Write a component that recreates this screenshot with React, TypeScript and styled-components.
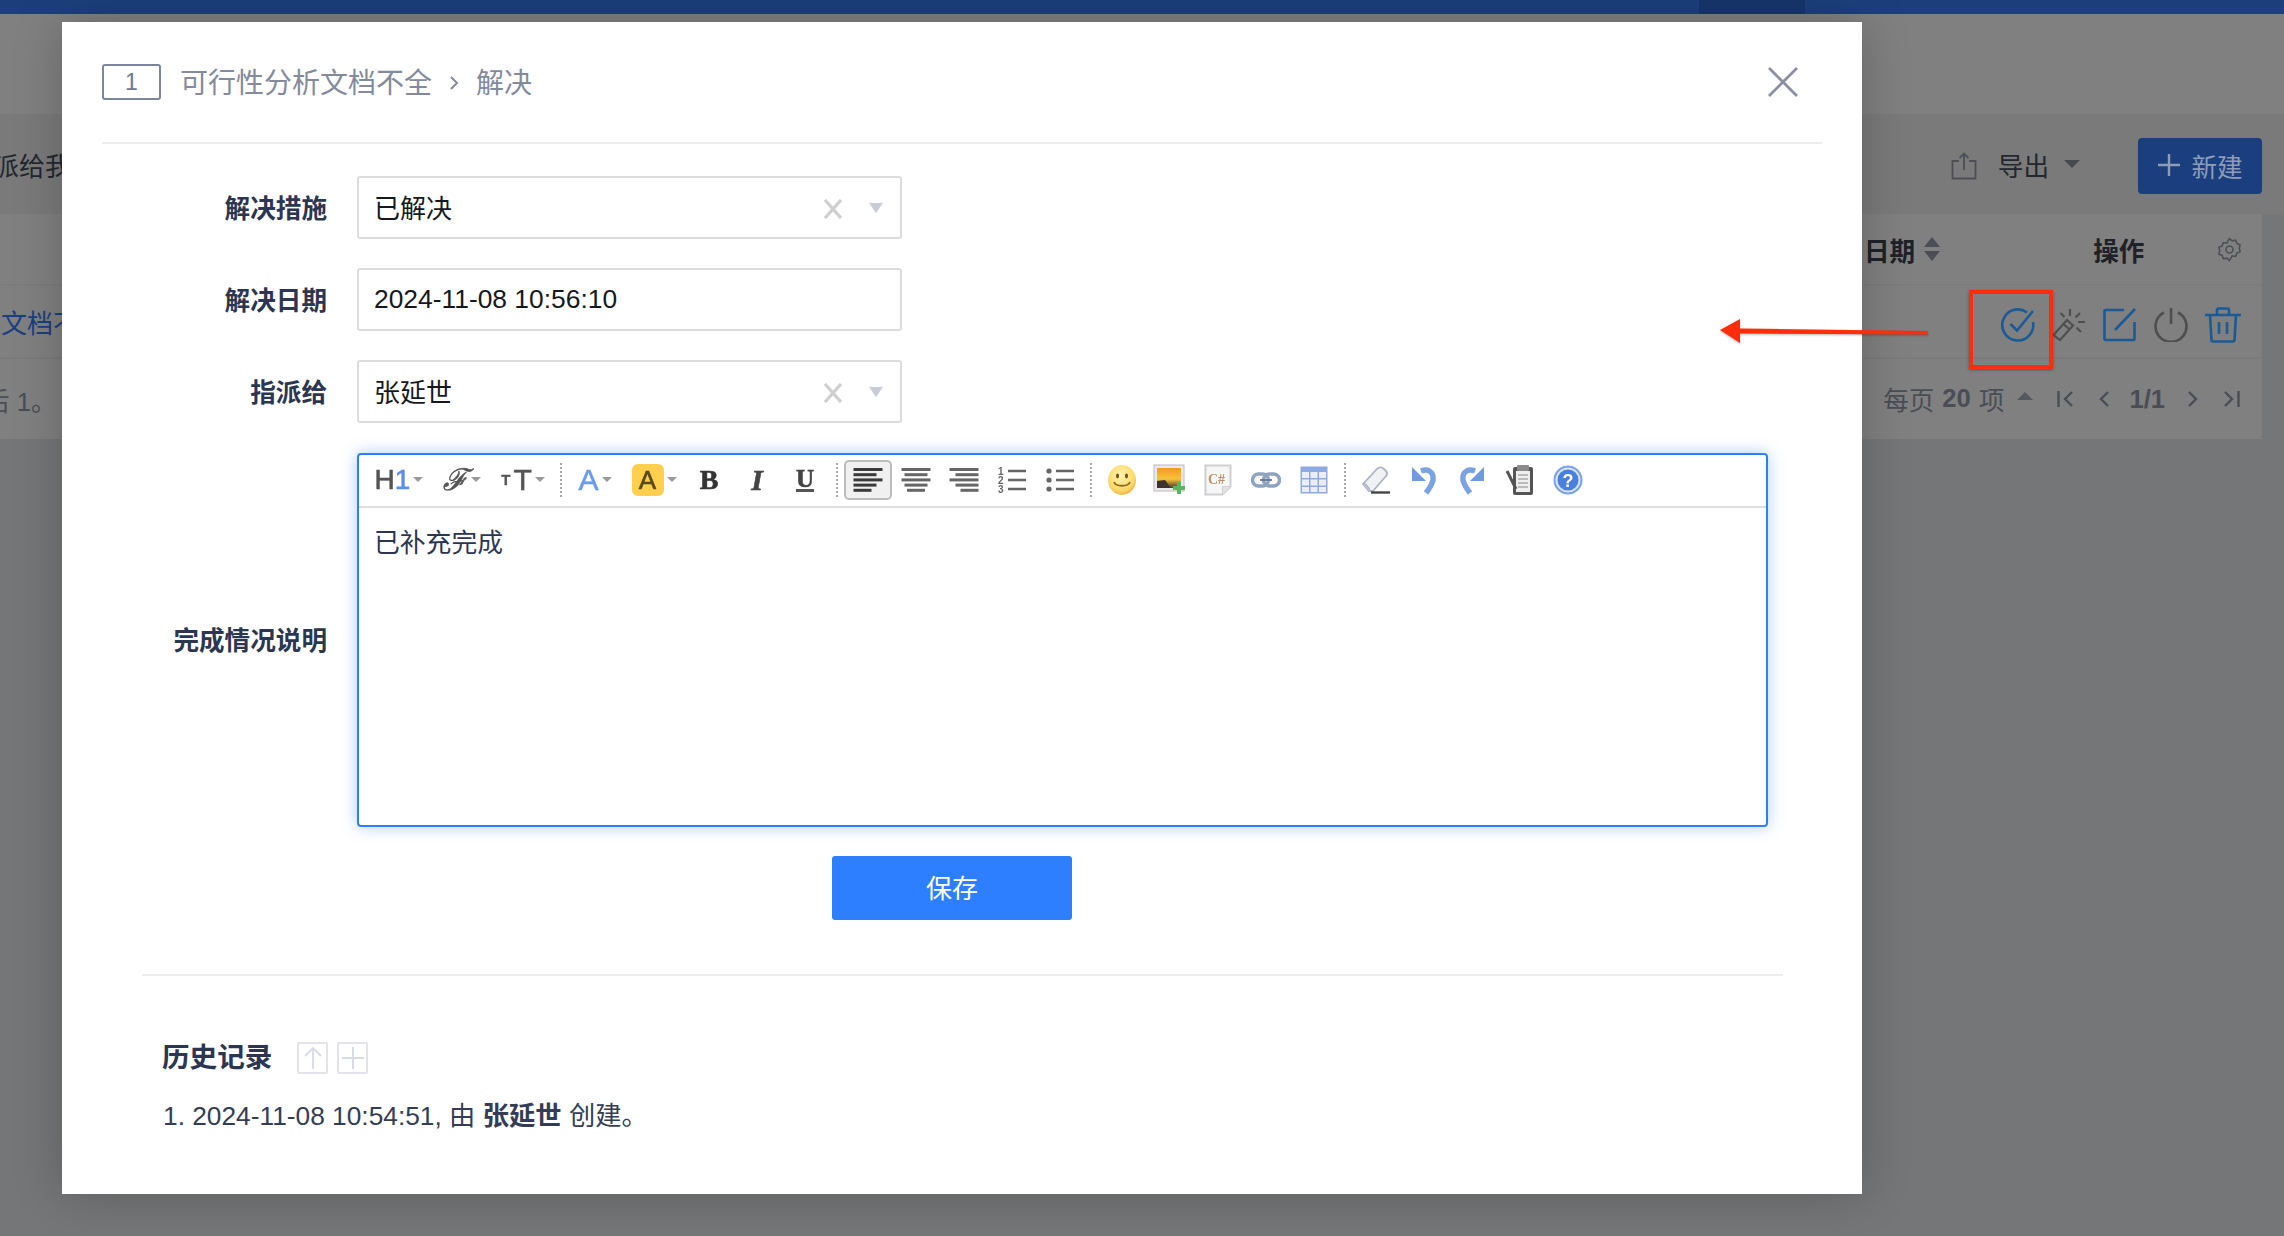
import React from "react";
import styled, { createGlobalStyle } from "styled-components";

const Global = createGlobalStyle`
  html, body { margin: 0; padding: 0; width: 2284px; height: 1236px; overflow: hidden; background: #757677; }
  #root { position: relative; width: 2284px; height: 1236px; overflow: hidden; }
  * { box-sizing: border-box; }
  svg { flex: none; }
  body { font-family: "Liberation Sans", "Noto Sans CJK SC", sans-serif; }
`;

const Page = styled.div`
  display: flex;
  flex-direction: column;
  width: 2284px;
  height: 1236px;
  background: #757677;
  color: #23272f;
  font-size: 26px;
`;
const TopBar = styled.div`
  height: 14px;
  background: #1c3f7c;
  padding-left: 1699px;
  flex: none;
`;
const TopTab = styled.div`
  width: 106px;
  height: 14px;
  background: #17366c;
`;
const SubBar = styled.div`
  height: 100px;
  background: #808080;
  flex: none;
`;
const ToolRow = styled.div`
  height: 100px;
  flex: none;
  background: #7a7a7a;
  display: flex;
  align-items: center;
  padding: 4px 22px 0 0;
`;
const ClippedText = styled.span<{ $color?: string; $ml: number; $mt?: number }>`
  margin-left: ${(p) => p.$ml}px;
  margin-top: ${(p) => p.$mt || 0}px;
  color: ${(p) => p.$color || "#23272f"};
  white-space: nowrap;
`;
const Spacer = styled.div`
  flex: 1;
`;
const NavGap = styled.span`
  width: 26px;
  flex: none;
`;
const ExportGroup = styled.div`
  display: flex;
  align-items: center;
  margin-right: 58px;
  color: #23272f;
`;
const ExportLabel = styled.span`
  margin: -4px 15px 0 21px;
  font-size: 25.6px;
`;
const DarkCaret = styled.span`
  width: 0;
  height: 0;
  border-left: 8px solid transparent;
  border-right: 8px solid transparent;
  border-top: 8px solid #46494f;
  margin-top: -4px;
`;
const NewButton = styled.div`
  width: 124px;
  height: 56px;
  border-radius: 4px;
  background: #1b3f7e;
  color: #8c9cb9;
  display: flex;
  align-items: center;
  justify-content: center;
  gap: 10px;
  font-size: 25.6px;
  padding-bottom: 2px;
`;
const TableHead = styled.div`
  height: 72px;
  width: 2262px;
  flex: none;
  background: #808080;
  border-bottom: 2px solid #7c7c7c;
  display: flex;
  align-items: center;
  padding-right: 19px;
  font-weight: 700;
  font-size: 25.6px;
  color: #1e2128;
`;
const HeadDate = styled.span`
  margin-left: 1864px;
  margin-right: 8px;
  white-space: nowrap;
`;
const HeadAction = styled.span`
  margin-left: 152px;
  margin-right: 73px;
  white-space: nowrap;
`;
const TableRow = styled.div`
  height: 73px;
  width: 2262px;
  flex: none;
  background: #808080;
  border-bottom: 2px solid #7b7b7b;
  display: flex;
  align-items: center;
`;
const RowIcons = styled.div`
  display: flex;
  align-items: center;
  margin-left: auto;
  padding: 6px 21px 0 0;
  gap: 17px;
`;
const Pager = styled.div`
  height: 80px;
  width: 2262px;
  flex: none;
  background: #808080;
  display: flex;
  align-items: center;
  color: #4a4d55;
  font-size: 25.6px;
`;
const PagerSize = styled.div`
  margin-left: auto;
  display: flex;
  align-items: center;
  white-space: nowrap;
  margin-top: -2px;
  b { margin: 0 8px; }
`;
const SmallUpCaret = styled.span`
  width: 0;
  height: 0;
  border-left: 8px solid transparent;
  border-right: 8px solid transparent;
  border-bottom: 8px solid #55585f;
  margin: -4px 0 0 13px;
`;
const PagerNav = styled.div`
  display: flex;
  align-items: center;
  margin: 0 22px 0 24px;
  b { margin: 0 23px 0 20px; }
`;

const Modal = styled.div`
  position: absolute;
  left: 62px;
  top: 22px;
  width: 1800px;
  height: 1172px;
  background: #fff;
  box-shadow: 0 0 46px rgba(0, 0, 0, 0.22);
  display: flex;
  flex-direction: column;
`;
const Header = styled.div`
  height: 122px;
  margin: 0 40px;
  border-bottom: 2px solid #eeeeee;
  flex: none;
  display: flex;
  align-items: center;
  color: #838a9c;
  font-size: 28px;
`;
const IdBadge = styled.span`
  width: 59px;
  height: 36px;
  border: 2px solid #7d869c;
  border-radius: 3px;
  display: flex;
  align-items: center;
  justify-content: center;
  font-size: 23px;
  margin-right: 19px;
  color: #6f778c;
`;
const Crumb = styled.span`
  white-space: nowrap;
  margin-top: -2px;
`;
const CloseWrap = styled.div`
  margin-left: auto;
  margin-right: 24px;
  display: flex;
`;
const Form = styled.div`
  display: flex;
  flex-direction: column;
  gap: 29px;
  margin-top: 32px;
  flex: none;
`;
const FormRow = styled.div`
  display: grid;
  grid-template-columns: 265px 1fr;
  column-gap: 30px;
  align-items: center;
`;
const Label = styled.label`
  text-align: right;
  font-size: 25.6px;
  font-weight: 700;
  color: #2d3650;
  white-space: nowrap;
  padding-bottom: 2px;
`;
const Field = styled.div`
  width: 545px;
  height: 63px;
  border: 2px solid #dcdcdc;
  border-radius: 3px;
  display: flex;
  align-items: center;
  padding: 0 17px 0 15px;
  color: #16181d;
  font-size: 26px;
`;
const FieldText = styled.span<{ $lift?: boolean; $size?: number }>`
  flex: 1;
  white-space: nowrap;
  padding-bottom: ${(p) => (p.$lift ? 3 : 0)}px;
  font-size: ${(p) => p.$size || 26}px;
`;
const SelectCaret = styled.span`
  width: 0;
  height: 0;
  border-left: 7px solid transparent;
  border-right: 7px solid transparent;
  border-top: 10px solid #c8ccd6;
  margin-left: 26px;
`;
const Editor = styled.div`
  width: 1411px;
  height: 374px;
  margin-top: 1px;
  border: 2px solid #2e7fff;
  border-radius: 4px;
  box-shadow: 0 0 16px rgba(46, 127, 255, 0.38);
  display: flex;
  flex-direction: column;
`;
const Toolbar = styled.div`
  height: 53px;
  border-bottom: 2px solid #dddddd;
  display: flex;
  align-items: center;
  padding: 0 0 2px 16px;
  flex: none;
`;
const Slot = styled.div<{ $ml?: number; $active?: boolean }>`
  width: 48px;
  height: 40px;
  flex: none;
  margin-left: ${(p) => p.$ml || 0}px;
  display: flex;
  align-items: center;
  justify-content: center;
  gap: 3px;
  filter: blur(0.5px);
  border-radius: 5px;
  border: ${(p) => (p.$active ? "2px solid #bcbcbc" : "none")};
  background: ${(p) => (p.$active ? "#f0f0f0" : "transparent")};
`;
const Dots = styled.div<{ $ml?: number }>`
  width: 14px;
  height: 34px;
  margin-left: ${(p) => p.$ml || 0}px;
  flex: none;
  display: flex;
  justify-content: center;
  &::after {
    content: "";
    width: 0;
    height: 34px;
    border-left: 2px dotted #a9a9a9;
  }
`;
const MiniCaret = styled.span`
  width: 0;
  height: 0;
  flex: none;
  border-left: 5px solid transparent;
  border-right: 5px solid transparent;
  border-top: 5px solid #9a9a9a;
`;
const GlyphText = styled.span<{ $size: number; $color?: string; $font?: string; $weight?: number; $italic?: boolean; $stroke?: number }>`
  font-family: ${(p) => p.$font || '"Liberation Sans"'}, sans-serif;
  font-size: ${(p) => p.$size}px;
  color: ${(p) => p.$color || "#555"};
  font-weight: ${(p) => p.$weight || 400};
  font-style: ${(p) => (p.$italic ? "italic" : "normal")};
  -webkit-text-stroke: ${(p) => p.$stroke ?? 0.6}px ${(p) => p.$color || "#555"};
  line-height: 1;
`;
const Sub1 = styled(GlyphText)`
  margin-left: -3px;
`;
const Underlined = styled(GlyphText)`
  border-bottom: 3px solid #555;
  line-height: 21px;
  padding: 0;
`;
const Highlight = styled.span`
  width: 32px;
  height: 32px;
  border-radius: 6px;
  background: #ffcf4d;
  display: flex;
  align-items: center;
  justify-content: center;
`;
const Body = styled.div`
  padding: 16px 15px;
  font-size: 25.8px;
  line-height: 38px;
  color: #2d3650;
`;
const SaveButton = styled.button`
  width: 240px;
  height: 64px;
  margin: 29px 0 0 770px;
  border: none;
  border-radius: 3px;
  background: #2e7fff;
  color: #fff;
  font-family: inherit;
  font-size: 26px;
  padding: 0 0 3px;
  flex: none;
`;
const Rule = styled.div`
  height: 2px;
  background: #eeeeee;
  margin: 54px 79px 0 80px;
  flex: none;
`;
const HistoryHead = styled.div`
  display: flex;
  align-items: center;
  margin: 66px 0 0 100px;
  height: 32px;
  flex: none;
`;
const HistoryTitle = styled.span`
  font-size: 27.6px;
  font-weight: 700;
  color: #2d3650;
  margin: -6px 25px 0 0;
  white-space: nowrap;
`;
const HistoryBtn = styled.span`
  width: 31px;
  height: 32px;
  border: 2px solid #e2e4ea;
  border-radius: 2px;
  margin-right: 9px;
  display: flex;
  align-items: center;
  justify-content: center;
`;
const HistoryItem = styled.div`
  margin: 20px 0 0 101px;
  font-size: 26.3px;
  color: #343d54;
  white-space: nowrap;
  b { font-weight: 700; }
`;
const RedBox = styled.div`
  position: absolute;
  left: 1969px;
  top: 290px;
  width: 84px;
  height: 79px;
  border: 4px solid #ff2d0b;
  box-shadow: 0 1px 3px rgba(0, 0, 0, 0.35);
`;
const ArrowWrap = styled.div`
  position: absolute;
  left: 1718px;
  top: 318px;
  display: flex;
  filter: drop-shadow(0 1px 1px rgba(0, 0, 0, 0.3));
`;
const ClearWrap = styled.span`
  display: flex;
  margin-top: 2px;
`;

const Line = ({ d, c = "#5a5a5a", w = 2.6 }: { d: string; c?: string; w?: number }) => (
  <path d={d} fill="none" stroke={c} strokeWidth={w} />
);

const AlignIcon = ({ kind }: { kind: "l" | "c" | "r" }) => {
  const widths = [29, 23, 29, 23, 18];
  return (
    <svg width="30" height="26" viewBox="0 0 30 26">
      {widths.map((w, i) => {
        const x = kind === "l" ? 0.5 : kind === "c" ? (30 - w) / 2 : 29.5 - w;
        return <rect key={i} x={x} y={1 + i * 5.2} width={w} height="3" fill={kind === "l" ? "#3a3a3a" : "#666"} />;
      })}
    </svg>
  );
};
const OlIcon = () => (
  <svg width="30" height="30" viewBox="0 0 30 30">
    <text x="1" y="10" fontSize="10" fontWeight="700" fontFamily="Liberation Sans" fill="#666">1</text>
    <text x="1" y="19" fontSize="10" fontWeight="700" fontFamily="Liberation Sans" fill="#666">2</text>
    <text x="1" y="28" fontSize="10" fontWeight="700" fontFamily="Liberation Sans" fill="#666">3</text>
    <Line d="M11 6h18M11 15h18M11 24h18" c="#666" />
  </svg>
);
const UlIcon = () => (
  <svg width="30" height="30" viewBox="0 0 30 30">
    <circle cx="4" cy="6" r="2.6" fill="#666" />
    <circle cx="4" cy="15" r="2.6" fill="#666" />
    <circle cx="4" cy="24" r="2.6" fill="#666" />
    <Line d="M11 6h18M11 15h18M11 24h18" c="#666" />
  </svg>
);
const SmileIcon = () => (
  <svg width="30" height="32" viewBox="0 0 30 32">
    <defs>
      <radialGradient id="smile" cx="45%" cy="35%" r="70%">
        <stop offset="0%" stopColor="#fff3b0" />
        <stop offset="70%" stopColor="#fbd96a" />
        <stop offset="100%" stopColor="#eea73a" />
      </radialGradient>
    </defs>
    <ellipse cx="15" cy="16" rx="14" ry="15" fill="url(#smile)" />
    <ellipse cx="10.5" cy="12" rx="1.5" ry="2.4" fill="#6b5310" />
    <ellipse cx="19.5" cy="12" rx="1.5" ry="2.4" fill="#6b5310" />
    <path d="M7 18c2 5 14 5 16 0" fill="none" stroke="#8a6a1c" strokeWidth="1.8" />
  </svg>
);
const ImageIcon = () => (
  <svg width="34" height="32" viewBox="0 0 34 32">
    <defs>
      <linearGradient id="sunset" x1="0" y1="0" x2="0" y2="1">
        <stop offset="0%" stopColor="#f29a1f" />
        <stop offset="55%" stopColor="#f7c23a" />
        <stop offset="100%" stopColor="#4a3a2a" />
      </linearGradient>
    </defs>
    <rect x="1" y="1" width="30" height="26" fill="#e9e9e9" stroke="#bcbcbc" />
    <rect x="4" y="4" width="24" height="20" fill="url(#sunset)" />
    <path d="M4 24v-7l8-1 6 8z" fill="#3c332c" />
    <path d="M24 18h4v4h4v4h-4v4h-4v-4h-4v-4h4z" fill="#5fb35f" />
  </svg>
);
const CodeIcon = () => (
  <svg width="28" height="32" viewBox="0 0 28 32">
    <path d="M1.5 1.5h25v21l-8 8h-17z" fill="#f6f6f6" stroke="#cfcfcf" strokeWidth="2" />
    <path d="M18.5 30.5v-8h8" fill="#e4e4e4" stroke="#cfcfcf" />
    <text x="4" y="20" fontSize="14" fontWeight="700" fontFamily="Liberation Serif" fill="#b99668">C#</text>
  </svg>
);
const LinkIcon = () => (
  <svg width="30" height="18" viewBox="0 0 30 18">
    <rect x="1.5" y="3" width="16" height="12" rx="6" fill="none" stroke="#8fa3bf" strokeWidth="3.4" />
    <rect x="12.5" y="3" width="16" height="12" rx="6" fill="none" stroke="#8fa3bf" strokeWidth="3.4" />
    <path d="M9 9h12" stroke="#6f7f99" strokeWidth="2" />
  </svg>
);
const TableIcon = () => (
  <svg width="28" height="28" viewBox="0 0 28 28">
    <rect x="0.5" y="0.5" width="27" height="27" fill="#8eaae0" />
    <rect x="2" y="6" width="7" height="6" fill="#e9eefa" />
    <rect x="10.5" y="6" width="7" height="6" fill="#e9eefa" />
    <rect x="19" y="6" width="7" height="6" fill="#e9eefa" />
    <rect x="2" y="13.5" width="7" height="6" fill="#e9eefa" />
    <rect x="10.5" y="13.5" width="7" height="6" fill="#e9eefa" />
    <rect x="19" y="13.5" width="7" height="6" fill="#e9eefa" />
    <rect x="2" y="21" width="7" height="5" fill="#e9eefa" />
    <rect x="10.5" y="21" width="7" height="5" fill="#e9eefa" />
    <rect x="19" y="21" width="7" height="5" fill="#e9eefa" />
  </svg>
);
const EraserIcon = () => (
  <svg width="30" height="28" viewBox="0 0 30 28">
    <path d="M2 18 16 3c2-2 5-2 7 0l2 2c2 2 1 4 0 5L12 25H8z" fill="#f0f1f3" stroke="#aeb6c4" strokeWidth="1.8" />
    <path d="M2 18c2-1 6 3 7 7" fill="#c9d0db" stroke="#aeb6c4" strokeWidth="1.5" />
    <path d="M10 26.500h19" stroke="#444" strokeWidth="2.4" />
  </svg>
);
const UndoIcon = ({ flip }: { flip?: boolean }) => (
  <svg width="26" height="32" viewBox="0 0 26 32" style={flip ? { transform: "scaleX(-1)" } : undefined}>
    <path d="M10 7c8-3 13 2 12 9-1 5-4 9-7 13" fill="none" stroke="#7aa2e4" strokeWidth="5.5" />
    <path d="M1 3v14h14z" fill="#6f9ae0" />
  </svg>
);
const ClipboardIcon = () => (
  <svg width="28" height="32" viewBox="0 0 28 32">
    <rect x="7" y="3" width="20" height="28" rx="2" fill="#555" />
    <rect x="10" y="7" width="14" height="21" fill="#efefef" />
    <rect x="11" y="1" width="12" height="6" rx="1" fill="#8a8a8a" />
    <path d="M12 11h10M12 15h10M12 19h10M12 23h10" stroke="#aaa" strokeWidth="1.6" />
    <path d="M1 7l9 18" stroke="#555" strokeWidth="3" />
  </svg>
);
const HelpIcon = () => (
  <svg width="30" height="30" viewBox="0 0 30 30">
    <circle cx="15" cy="15" r="13.500" fill="#d6e3f9" stroke="#7ba1e6" strokeWidth="2" />
    <circle cx="15" cy="15" r="10.500" fill="#4a7fdc" />
    <text x="15" y="21.500" fontSize="18" fontWeight="700" textAnchor="middle" fontFamily="Liberation Sans" fill="#fff">?</text>
  </svg>
);
const ClearX = () => (
  <svg width="20" height="20" viewBox="0 0 20 20">
    <path d="M2 1l16 18M18 1 2 19" stroke="#cfcfcf" strokeWidth="3.2" fill="none" />
  </svg>
);
const Chevron = () => (
  <svg width="14" height="20" viewBox="0 0 14 20" style={{ margin: "2px 15px 0 15px" }}>
    <path d="M4 4l6 6-6 6" fill="none" stroke="#838a9c" strokeWidth="2" />
  </svg>
);
const CloseIcon = () => (
  <svg width="30" height="30" viewBox="0 0 30 30">
    <path d="M1 1l28 28M29 1 1 29" stroke="#8a90a2" strokeWidth="2.8" fill="none" />
  </svg>
);
const ShareIcon = () => (
  <svg width="26" height="28" viewBox="0 0 26 28" style={{ marginLeft: 1 }}>
    <path d="M8 9H1.500v17.500h23V9H18" fill="none" stroke="#4d4f55" strokeWidth="1.800" />
    <path d="M13 18V2M8.500 6 13 1.500 17.500 6" fill="none" stroke="#4d4f55" strokeWidth="1.800" />
  </svg>
);
const PlusIcon = () => (
  <svg width="24" height="24" viewBox="0 0 24 24">
    <path d="M12 1v22M1 12h22" stroke="#8c9cb9" strokeWidth="2.400" />
  </svg>
);
const SortIcon = () => (
  <svg width="18" height="24" viewBox="0 0 18 24">
    <path d="M9 0l8 10H1zM9 24 1 14h16z" fill="#4b4e55" />
  </svg>
);
const GearIcon = () => (
  <svg width="25" height="25" viewBox="0 0 24 24" fill="none" stroke="#4d4f55" strokeWidth="1.500">
    <path d="M12 1.500l2.600 2.200 3.300-.6 1.200 3.200 3.100 1.300-.8 3.300.8 3.300-3.100 1.300-1.200 3.200-3.300-.6L12 22.500l-2.600-2.200-3.300.6-1.200-3.200-3.100-1.300.8-3.300-.8-3.300 3.100-1.300 1.200-3.200 3.300.6z" />
    <circle cx="12" cy="12" r="3.400" />
  </svg>
);
const CheckIcon = () => (
  <svg width="34" height="34" viewBox="0 0 34 34" fill="none" stroke="#1a5a96" strokeWidth="2.600">
    <path d="M26 4.500A15.500 15.500 0 1 0 32 14" />
    <path d="M9.500 16l6.500 6.500L32 3" />
  </svg>
);
const WandIcon = () => (
  <svg width="34" height="34" viewBox="0 0 34 34" fill="none" stroke="#4f4f4f" strokeWidth="2.200">
    <path d="M1.500 27 15 12l6 5.500L8 32z" />
    <path d="M11.500 16l6 5.500" />
    <path d="M18 1v7M28 5l-4.500 4.500M33 14h-7M29 24l-4.500-4.500M8.500 5l4 4" />
  </svg>
);
const EditIcon = () => (
  <svg width="34" height="34" viewBox="0 0 34 34" fill="none" stroke="#1a5a96" strokeWidth="2.600">
    <path d="M21 2H2.500a1 1 0 0 0-1 1v28a1 1 0 0 0 1 1h28a1 1 0 0 0 1-1V14" />
    <path d="M12 22 32 1" />
  </svg>
);
const PowerIcon = () => (
  <svg width="34" height="34" viewBox="0 0 34 34" fill="none" stroke="#4f4f4f" strokeWidth="2.600">
    <path d="M10 4.500a15.500 15.500 0 1 0 14 0" />
    <path d="M17 0v16" />
  </svg>
);
const TrashIcon = () => (
  <svg width="36" height="36" viewBox="0 0 36 36" fill="none" stroke="#1a5a96" strokeWidth="2.600">
    <path d="M0 8h36M12 8V3a1.500 1.500 0 0 1 1.500-1.500h9A1.500 1.500 0 0 1 24 3v5" />
    <path d="M5 8l1.500 25a1.500 1.500 0 0 0 1.500 1.500h20a1.500 1.500 0 0 0 1.500-1.500L31 8" />
    <path d="M14 15v12M22 15v12" />
  </svg>
);
const FirstIcon = ({ flip }: { flip?: boolean }) => (
  <svg width="16" height="18" viewBox="0 0 16 18" style={flip ? { transform: "scaleX(-1)" } : undefined}>
    <path d="M1.500 1v16M15 2 8 9l7 7" fill="none" stroke="#4a4d55" strokeWidth="2.400" />
  </svg>
);
const PrevIcon = ({ flip }: { flip?: boolean }) => (
  <svg width="10" height="18" viewBox="0 0 10 18" style={flip ? { transform: "scaleX(-1)" } : undefined}>
    <path d="M9 2 2 9l7 7" fill="none" stroke="#4a4d55" strokeWidth="2.400" />
  </svg>
);
const ArrowUpIcon = () => (
  <svg width="20" height="24" viewBox="0 0 20 24">
    <path d="M10 23V2M2 10l8-8 8 8" fill="none" stroke="#d8dbe4" strokeWidth="1.800" />
  </svg>
);
const PlusSmall = () => (
  <svg width="24" height="24" viewBox="0 0 24 24">
    <path d="M12 1v22M1 12h22" stroke="#d8dbe4" strokeWidth="2" />
  </svg>
);
const RedArrow = () => (
  <svg width="212" height="26" viewBox="0 0 212 26">
    <path d="M2 12 22 1v9.500l188 2.500v3.500L22 15.500V25z" fill="#ff2d0b" />
  </svg>
);

export default function App() {
  return (
    <>
      <Global />
      <Page>
        <TopBar>
          <TopTab />
        </TopBar>
        <SubBar />
        <ToolRow>
          <ClippedText $ml={-7} $mt={-4}>派给我</ClippedText>
          <Spacer />
          <ExportGroup>
            <ShareIcon />
            <ExportLabel>导出</ExportLabel>
            <DarkCaret />
          </ExportGroup>
          <NewButton>
            <PlusIcon />
            新建
          </NewButton>
        </ToolRow>
        <TableHead>
          <HeadDate>日期</HeadDate>
          <SortIcon />
          <HeadAction>操作</HeadAction>
          <GearIcon />
        </TableHead>
        <TableRow>
          <ClippedText $ml={1} $color="#1b3f7e">文档不</ClippedText>
          <RowIcons>
            <CheckIcon />
            <WandIcon />
            <EditIcon />
            <PowerIcon />
            <TrashIcon />
          </RowIcons>
        </TableRow>
        <Pager>
          <ClippedText $ml={-16} $color="#4a4d55">后 1。</ClippedText>
          <PagerSize>
            每页<b>20</b>项
            <SmallUpCaret />
          </PagerSize>
          <PagerNav>
            <FirstIcon />
            <NavGap />
            <PrevIcon />
            <b>1/1</b>
            <PrevIcon flip />
            <NavGap />
            <FirstIcon flip />
          </PagerNav>
        </Pager>
      </Page>

      <Modal>
        <Header>
          <IdBadge>1</IdBadge>
          <Crumb>可行性分析文档不全</Crumb>
          <Chevron />
          <Crumb>解决</Crumb>
          <CloseWrap>
            <CloseIcon />
          </CloseWrap>
        </Header>
        <Form>
          <FormRow>
            <Label>解决措施</Label>
            <Field>
              <FieldText $lift>已解决</FieldText>
              <ClearWrap>
                <ClearX />
              </ClearWrap>
              <SelectCaret />
            </Field>
          </FormRow>
          <FormRow>
            <Label>解决日期</Label>
            <Field>
              <FieldText $size={26.4}>2024-11-08 10:56:10</FieldText>
            </Field>
          </FormRow>
          <FormRow>
            <Label>指派给</Label>
            <Field>
              <FieldText $lift>张延世</FieldText>
              <ClearWrap>
                <ClearX />
              </ClearWrap>
              <SelectCaret />
            </Field>
          </FormRow>
          <FormRow>
            <Label>完成情况说明</Label>
            <Editor>
              <Toolbar>
                <Slot>
                  <GlyphText $size={28}>H</GlyphText>
                  <Sub1 $size={28} $color="#5b8fe8">1</Sub1>
                  <MiniCaret />
                </Slot>
                <Slot $ml={15}>
                  <GlyphText $size={30} $font='"DejaVu Serif"' $italic>ℱ</GlyphText>
                  <MiniCaret />
                </Slot>
                <Slot $ml={13}>
                  <GlyphText $size={15} $weight={700} $stroke={0.3}>T</GlyphText>
                  <GlyphText $size={30}>T</GlyphText>
                  <MiniCaret />
                </Slot>
                <Dots $ml={7} />
                <Slot $ml={3}>
                  <GlyphText $size={30} $color="#6c9cef">A</GlyphText>
                  <MiniCaret />
                </Slot>
                <Slot $ml={11}>
                  <Highlight>
                    <GlyphText $size={26} $color="#5b4a1c">A</GlyphText>
                  </Highlight>
                  <MiniCaret />
                </Slot>
                <Slot $ml={7}>
                  <GlyphText $size={28} $font='"Liberation Serif"' $weight={700} $color="#333">B</GlyphText>
                </Slot>
                <Slot>
                  <GlyphText $size={30} $font='"Liberation Serif"' $weight={700} $italic $color="#444">I</GlyphText>
                </Slot>
                <Slot>
                  <Underlined as="span" $size={25} $font='"Liberation Serif"' $weight={700} $color="#444">U</Underlined>
                </Slot>
                <Dots $ml={1} />
                <Slot $active>
                  <AlignIcon kind="l" />
                </Slot>
                <Slot>
                  <AlignIcon kind="c" />
                </Slot>
                <Slot>
                  <AlignIcon kind="r" />
                </Slot>
                <Slot>
                  <OlIcon />
                </Slot>
                <Slot>
                  <UlIcon />
                </Slot>
                <Dots />
                <Slot>
                  <SmileIcon />
                </Slot>
                <Slot>
                  <ImageIcon />
                </Slot>
                <Slot>
                  <CodeIcon />
                </Slot>
                <Slot>
                  <LinkIcon />
                </Slot>
                <Slot>
                  <TableIcon />
                </Slot>
                <Dots />
                <Slot>
                  <EraserIcon />
                </Slot>
                <Slot>
                  <UndoIcon />
                </Slot>
                <Slot>
                  <UndoIcon flip />
                </Slot>
                <Slot>
                  <ClipboardIcon />
                </Slot>
                <Slot>
                  <HelpIcon />
                </Slot>
              </Toolbar>
              <Body>已补充完成</Body>
            </Editor>
          </FormRow>
        </Form>
        <SaveButton>保存</SaveButton>
        <Rule />
        <HistoryHead>
          <HistoryTitle>历史记录</HistoryTitle>
          <HistoryBtn>
            <ArrowUpIcon />
          </HistoryBtn>
          <HistoryBtn>
            <PlusSmall />
          </HistoryBtn>
        </HistoryHead>
        <HistoryItem>
          1. 2024-11-08 10:54:51, 由 <b>张延世</b> 创建。
        </HistoryItem>
      </Modal>

      <RedBox />
      <ArrowWrap>
        <RedArrow />
      </ArrowWrap>
    </>
  );
}
